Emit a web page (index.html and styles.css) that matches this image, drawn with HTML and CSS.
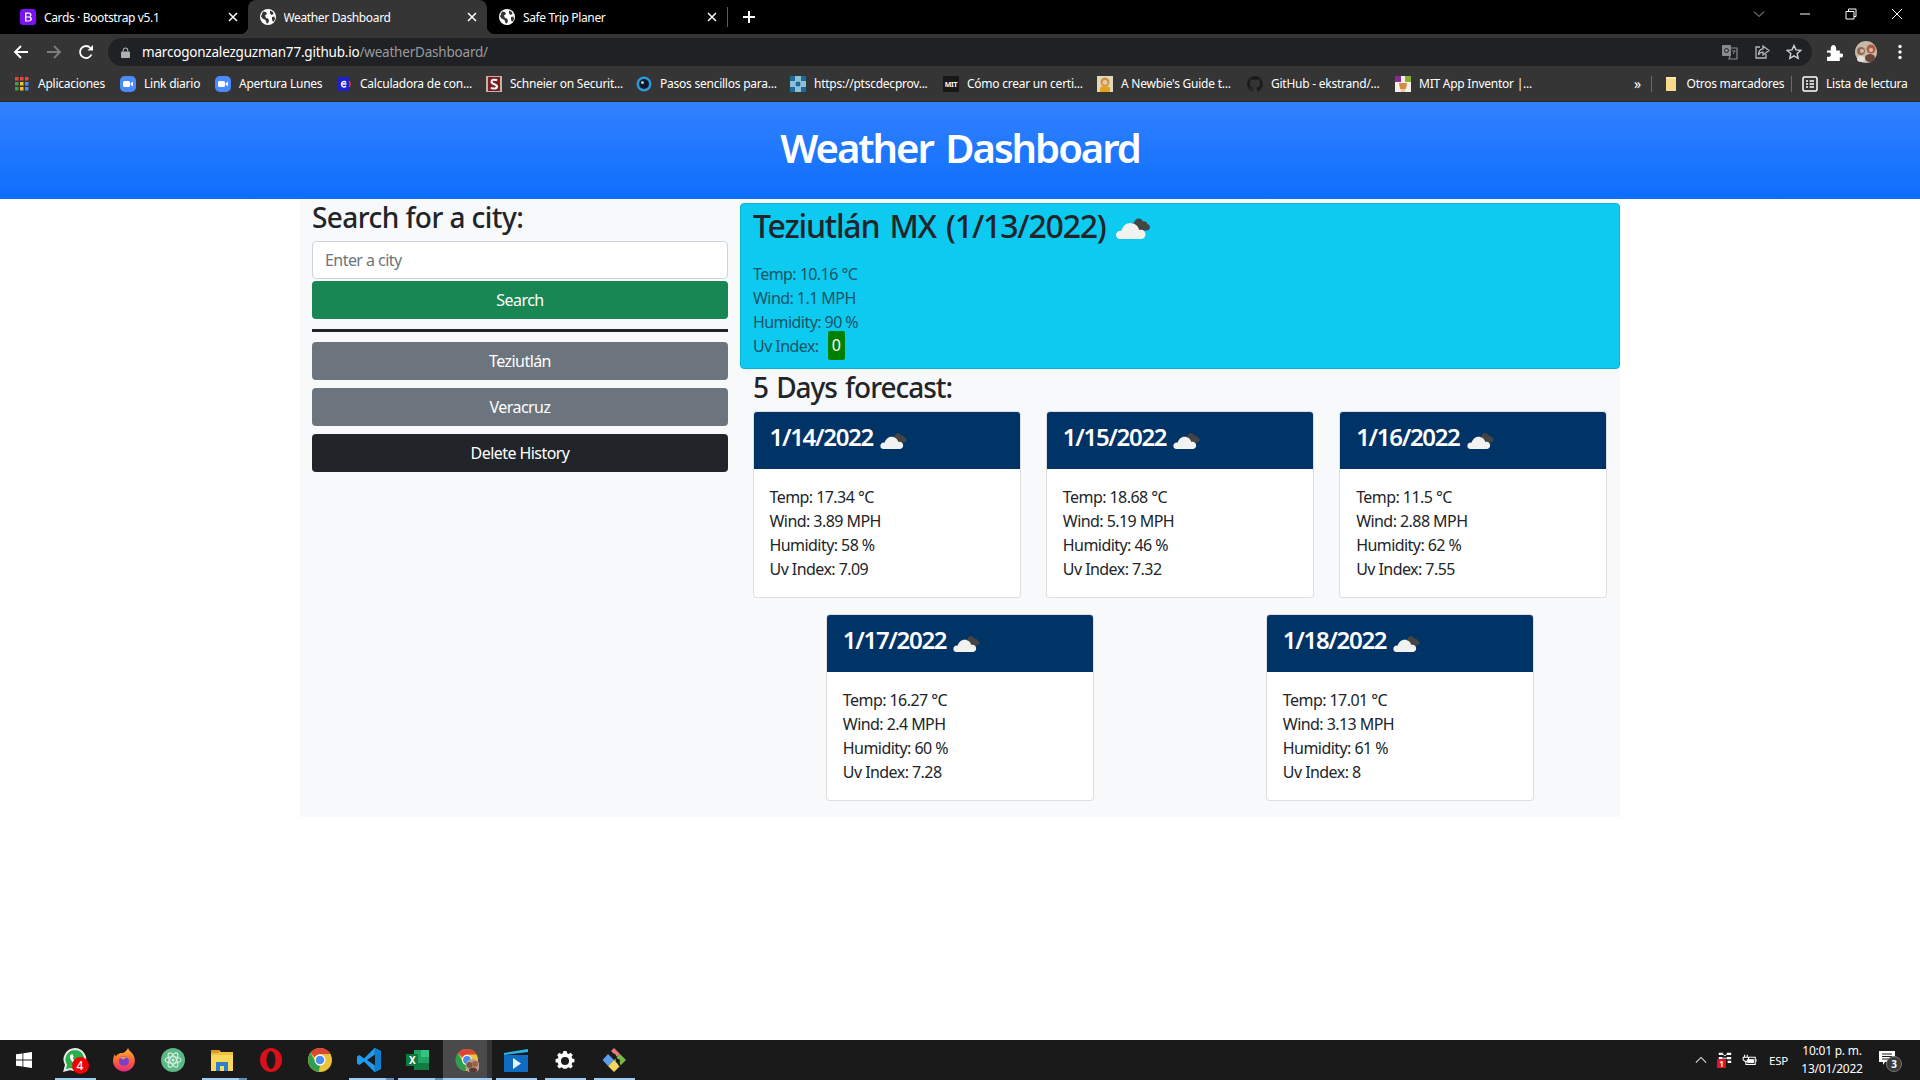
FILE: index.html
```html
<!DOCTYPE html>
<html lang="es">
<head>
<meta charset="utf-8">
<title>Weather Dashboard</title>
<link rel="stylesheet" href="styles.css">
</head>
<body>
<svg class="defs" width="0" height="0" aria-hidden="true">
  <symbol id="globe" viewBox="0 0 16 16">
    <circle cx="8" cy="8" r="8" fill="#fff"/>
    <path d="M3 2.500l3 .5 1 2-2 1.500L6 9l2 .5 1 2-1 3-1.500-.5-1-3-3-1.500L1 7.500zM10 1.500l3 1.500.5 2-2 1-1.500-1.500zM12 8l2.500-.5.5 3-2 2.500-1-2.500z" fill="#353535"/>
  </symbol>
  <symbol id="cloud" viewBox="0 0 34 22">
    <path d="M14 7c1-1 3-1.500 4-1 .5-3 3-5 5.500-4.500 1.800.3 3 1.500 3.500 3 2-.5 4 .5 4.300 2.500 1.700.3 2.700 1.700 2.700 3 0 2-1.500 3.500-3.500 3.500H20z" fill="#444"/>
    <path d="M4 22C1.700 22 0 20.300 0 18c0-2.500 2-4.300 4.300-4.300.4 0 .8 0 1.200.1C6.500 9.500 10 6 14.500 6c4.300 0 7.800 3 8.700 7 .5-.2 1-.3 1.600-.3 2.700 0 4.700 2 4.700 4.700S27.500 22 25 22z" fill="#f2f2f0"/>
  </symbol>
  <symbol id="zoomcam" viewBox="0 0 16 16">
    <rect width="16" height="16" rx="5" fill="#4a8cff"/>
    <rect x="3" y="5" width="7" height="6" rx="1.500" fill="#fff"/>
    <path d="M10.500 7.500l2.500-2v5l-2.500-2z" fill="#fff"/>
  </symbol>
</svg>

<div class="browser">
  <div class="tabstrip">
    <div class="tab">
      <svg class="favicon" viewBox="0 0 16 16"><rect width="16" height="16" rx="3" fill="#7b12f5"/><path d="M5 3.500h3.500c2 0 3 1 3 2.300 0 1-.6 1.800-1.500 2 1.200.2 2 1.100 2 2.300 0 1.600-1.200 2.400-3.200 2.400H5zM6.400 4.700v2.800h1.800c1.200 0 1.900-.5 1.900-1.500 0-.9-.6-1.300-1.800-1.300zM6.400 8.600v3h2c1.300 0 2-.5 2-1.500s-.8-1.500-2.200-1.500z" fill="#fff"/></svg>
      <span class="tab-title">Cards · Bootstrap v5.1</span>
      <svg class="tab-close" viewBox="0 0 12 12"><path d="M2 2l8 8M10 2l-8 8" stroke="#fff" stroke-width="1.500"/></svg>
    </div>
    <div class="tab tab-active">
      <svg class="favicon"><use href="#globe"/></svg>
      <span class="tab-title">Weather Dashboard</span>
      <svg class="tab-close" viewBox="0 0 12 12"><path d="M2 2l8 8M10 2l-8 8" stroke="#fff" stroke-width="1.500"/></svg>
    </div>
    <div class="tab">
      <svg class="favicon"><use href="#globe"/></svg>
      <span class="tab-title">Safe Trip Planer</span>
      <svg class="tab-close" viewBox="0 0 12 12"><path d="M2 2l8 8M10 2l-8 8" stroke="#fff" stroke-width="1.500"/></svg>
    </div>
    <span class="tab-sep"></span>
    <svg class="tab-new" viewBox="0 0 14 14"><path d="M7 1v12M1 7h12" stroke="#fff" stroke-width="2"/></svg>
    <div class="window-controls">
      <span class="win-btn"><svg viewBox="0 0 12 12"><path d="M1 3.500l5 5 5-5" fill="none" stroke="#b0b0b0"/></svg></span>
      <span class="win-btn"><svg viewBox="0 0 12 12"><path d="M1 6h10" stroke="#fff"/></svg></span>
      <span class="win-btn"><svg viewBox="0 0 12 12"><path d="M3.500 3V1h7.500v7.500H9M1 3.500h8V11H1z" fill="none" stroke="#fff"/></svg></span>
      <span class="win-btn"><svg viewBox="0 0 12 12"><path d="M1 1l10 10M11 1L1 11" stroke="#fff"/></svg></span>
    </div>
  </div>

  <div class="toolbar">
    <span class="nav-btn"><svg viewBox="0 0 16 16"><path d="M15 8H2M8 2L2 8l6 6" fill="none" stroke="#fff" stroke-width="1.800"/></svg></span>
    <span class="nav-btn"><svg viewBox="0 0 16 16"><path d="M1 8h13M8 2l6 6-6 6" fill="none" stroke="#7d7d7d" stroke-width="1.800"/></svg></span>
    <span class="nav-btn"><svg viewBox="0 0 16 16"><path d="M13.500 10.500A6 6 0 1 1 12.500 4" fill="none" stroke="#fff" stroke-width="1.800"/><path d="M9.500 6.500h5.500V1z" fill="#fff"/></svg></span>
    <div class="omnibox">
      <svg class="lock" viewBox="0 0 10 12"><path d="M2.500 5V3.500a2.500 2.500 0 0 1 5 0V5" fill="none" stroke="#b0b1b3" stroke-width="1.200"/><rect y="5" width="10" height="7" rx="1" fill="#b0b1b3"/></svg>
      <span class="url">marcogonzalezguzman77.github.io<span class="url-path">/weatherDashboard/</span></span>
      <svg class="omni-icon" viewBox="0 0 16 16"><rect x="0" y="1" width="9" height="11" rx="1" fill="#8a8b8d"/><path d="M8 4h7v11H7l1-3z" fill="none" stroke="#8a8b8d" stroke-width="1.200"/><circle cx="4.500" cy="6.500" r="2" fill="none" stroke="#202124"/><path d="M10 7h3.500M11 10l2-3" stroke="#8a8b8d"/></svg>
      <svg class="omni-icon" viewBox="0 0 16 16"><path d="M6 3H2v11h10v-4" fill="none" stroke="#b5b6b8" stroke-width="1.300"/><path d="M9 2l6 4.500L9 11V8.200C7 8.200 5.500 9 4.500 11c0-3.500 1.500-6 4.500-6.200z" fill="none" stroke="#b5b6b8" stroke-width="1.300"/></svg>
      <svg class="omni-icon" viewBox="0 0 16 16"><path d="M8 1.500l2 4.400 4.800.5-3.600 3.200 1 4.700L8 11.900l-4.200 2.400 1-4.700L1.200 6.400 6 5.900z" fill="none" stroke="#d0d1d3" stroke-width="1.400"/></svg>
    </div>
    <svg class="tool-icon" viewBox="0 0 16 16"><path d="M1 6h3.500C4 2.500 5.500 1 7 1s3 1.500 2.500 5H13v3c3-.5 3.500 1 3 2.500-.5 1-1.500 1.500-3 1V16H1v-4c2.500.5 3.500-.5 3.500-2S3.500 7.500 1 8.500z" fill="#fff"/></svg>
    <svg class="avatar" viewBox="0 0 22 22"><circle cx="11" cy="11" r="11" fill="#c8b8a8"/><circle cx="6" cy="10" r="4" fill="#8a6a58"/><circle cx="16" cy="8" r="4.500" fill="#a85f48"/><ellipse cx="15" cy="17" rx="5" ry="4" fill="#6a4438"/><ellipse cx="6" cy="18" rx="4" ry="3" fill="#e8e0d8"/><circle cx="7" cy="10" r="2" fill="#e0b8a0"/><circle cx="16" cy="9" r="2" fill="#e8b8a0"/></svg>
    <svg class="tool-dots" viewBox="0 0 4 16"><circle cx="2" cy="2.500" r="1.700" fill="#fff"/><circle cx="2" cy="8" r="1.700" fill="#fff"/><circle cx="2" cy="13.500" r="1.700" fill="#fff"/></svg>
  </div>

  <div class="bookmarks">
    <span class="bm">
      <svg class="bm-icon" viewBox="-1 -1 16 16"><g><rect x="0" y="0" width="3.500" height="3.500" fill="#e8453c"/><rect x="5" y="0" width="3.500" height="3.500" fill="#e8453c"/><rect x="10" y="0" width="3.500" height="3.500" fill="#e8453c"/><rect x="0" y="5" width="3.500" height="3.500" fill="#4a9a55"/><rect x="5" y="5" width="3.500" height="3.500" fill="#f9bb2d"/><rect x="10" y="5" width="3.500" height="3.500" fill="#4a8cf0"/><rect x="0" y="10" width="3.500" height="3.500" fill="#4a9a55"/><rect x="5" y="10" width="3.500" height="3.500" fill="#f9bb2d"/><rect x="10" y="10" width="3.500" height="3.500" fill="#4a8cf0"/></g></svg>
      <span class="bm-label w66">Aplicaciones</span>
    </span>
    <span class="bm"><svg class="bm-icon"><use href="#zoomcam"/></svg><span class="bm-label w55">Link diario</span></span>
    <span class="bm"><svg class="bm-icon"><use href="#zoomcam"/></svg><span class="bm-label w81">Apertura Lunes</span></span>
    <span class="bm">
      <svg class="bm-icon" viewBox="0 0 16 16"><rect x="2" y="1" width="11" height="14" rx="1" fill="#1d1fd0"/><path d="M10.500 8H5.500a2.500 2.500 0 0 1 4.500-1.500M5.500 8.500a2.500 2.500 0 0 0 4.500 1.500" fill="none" stroke="#fff" stroke-width="1.300"/><path d="M13 5c1.500 2 1.500 4 0 6" fill="none" stroke="#e8352c" stroke-width="1.500"/></svg>
      <span class="bm-label w110">Calculadora de con...</span>
    </span>
    <span class="bm">
      <svg class="bm-icon" viewBox="0 0 16 16"><rect width="16" height="16" fill="#c8b0a8"/><rect x="2" y="1" width="12" height="14" fill="#7c1f22"/><path d="M11 4.500C10 3.500 5.500 3 5.500 5.800S11 7.800 11 10.500 6 13 5 11.500" fill="none" stroke="#fff" stroke-width="2"/></svg>
      <span class="bm-label w110">Schneier on Securit...</span>
    </span>
    <span class="bm">
      <svg class="bm-icon" viewBox="0 0 16 16"><circle cx="8" cy="8" r="7.500" fill="#2a9ad8"/><circle cx="8" cy="8" r="5" fill="#10182a"/><circle cx="6.500" cy="6.500" r="1.500" fill="#9ad8f0"/></svg>
      <span class="bm-label w114">Pasos sencillos para...</span>
    </span>
    <span class="bm">
      <svg class="bm-icon" viewBox="0 0 16 16"><rect width="16" height="16" fill="#dfe8f0"/><path d="M0 0h5v5H0zM11 0h5v5h-5zM5.500 5.500h5v5h-5zM0 11h5v5H0zM11 11h5v5h-5z" fill="#1f6a9a"/><path d="M5 0h6v5H5zM0 5h5v6H0zM11 5h5v6h-5zM5 11h6v5H5z" fill="#8ac0d8"/></svg>
      <span class="bm-label w113">https://ptscdecprov...</span>
    </span>
    <span class="bm">
      <svg class="bm-icon" viewBox="0 0 16 16"><rect width="16" height="16" fill="#181818"/><text x="8" y="11" text-anchor="middle" class="nt">MIT</text></svg>
      <span class="bm-label w114">Cómo crear un certi...</span>
    </span>
    <span class="bm">
      <svg class="bm-icon" viewBox="0 0 16 16"><rect width="16" height="16" fill="#e0d8b8"/><circle cx="8" cy="6" r="4.500" fill="#c89048"/><circle cx="8" cy="6.500" r="2.500" fill="#e8c898"/><path d="M3 16v-4c0-1 2-2 5-2s5 1 5 2v4z" fill="#e8a020"/></svg>
      <span class="bm-label w110">A Newbie's Guide t...</span>
    </span>
    <span class="bm">
      <svg class="bm-icon" viewBox="0 0 16 16"><path d="M8 0a8 8 0 0 0-2.500 15.600c.4.100.5-.2.500-.4v-1.400c-2.200.5-2.700-1-2.700-1-.4-.9-.9-1.200-.9-1.200-.7-.5.100-.5.100-.5.800.1 1.200.8 1.200.8.700 1.200 1.900.9 2.300.7.100-.5.300-.9.500-1.100-1.800-.2-3.600-.9-3.600-4 0-.9.300-1.600.8-2.100-.1-.2-.4-1 .1-2.100 0 0 .7-.2 2.200.8a7.600 7.600 0 0 1 4 0c1.500-1 2.200-.8 2.200-.8.400 1.100.2 1.900.1 2.100.5.600.8 1.300.8 2.100 0 3.100-1.900 3.700-3.700 3.900.3.300.6.700.6 1.500v2.200c0 .2.100.5.600.4A8 8 0 0 0 8 0z" fill="#1b1b1b"/></svg>
      <span class="bm-label w108">GitHub - ekstrand/...</span>
    </span>
    <span class="bm">
      <svg class="bm-icon" viewBox="0 0 16 16"><rect width="16" height="16" fill="#f4f0e8"/><path d="M0 0h6v6H0z" fill="#8a2a90"/><path d="M10 0h6v6h-6z" fill="#8ab030"/><path d="M4 7h8l-1 6H5z" fill="#d88a40"/><path d="M6 13h4v3H6z" fill="#e8c8a0"/></svg>
      <span class="bm-label w108">MIT App Inventor |...</span>
    </span>
    <div class="bm-right">
      <span class="bm-more">»</span>
      <span class="bm-sep"></span>
      <span class="bm">
        <svg class="bm-icon" viewBox="0 0 16 16"><path d="M3 1h10v14H3z" fill="#f6d98a"/><path d="M3 1h10v2H3z" fill="#fbe9b0"/></svg>
        <span class="bm-label w94">Otros marcadores</span>
      </span>
      <span class="bm-sep"></span>
      <span class="bm">
        <svg class="bm-icon" viewBox="0 0 16 16"><rect x="1" y="1" width="14" height="14" rx="1.500" fill="none" stroke="#fff" stroke-width="1.500"/><path d="M4 5h2M7.500 5H12M4 8h2M7.500 8H12M4 11h2M7.500 11H12" stroke="#fff" stroke-width="1.500"/></svg>
        <span class="bm-label w80">Lista de lectura</span>
      </span>
    </div>
  </div>
</div>

<main class="page">
  <header class="hero"><h1>Weather Dashboard</h1></header>
  <div class="container">
    <aside class="side">
      <h3 class="side-title">Search for a city:</h3>
      <input class="city-input" type="text" placeholder="Enter a city">
      <button class="btn btn-search">Search</button>
      <hr class="rule">
      <div class="history">
        <button class="btn btn-city">Teziutlán</button>
        <button class="btn btn-city">Veracruz</button>
        <button class="btn btn-dark">Delete History</button>
      </div>
    </aside>
    <section class="content">
      <div class="current">
        <h2 class="current-title"><span>Teziutlán MX (1/13/2022)</span><svg class="cloud-lg"><use href="#cloud"/></svg></h2>
        <p class="stat">Temp: 10.16 °C</p>
        <p class="stat">Wind: 1.1 MPH</p>
        <p class="stat">Humidity: 90 %</p>
        <p class="stat stat-uv">Uv Index: <span class="uv-badge">0</span></p>
      </div>
      <h3 class="forecast-title">5 Days forecast:</h3>
      <div class="forecast">
        <div class="fc-col"><article class="fc-card">
          <div class="fc-head"><h4>1/14/2022</h4><svg class="cloud-sm"><use href="#cloud"/></svg></div>
          <div class="fc-body"><p>Temp: 17.34 °C</p><p>Wind: 3.89 MPH</p><p>Humidity: 58 %</p><p>Uv Index: 7.09</p></div>
        </article></div>
        <div class="fc-col"><article class="fc-card">
          <div class="fc-head"><h4>1/15/2022</h4><svg class="cloud-sm"><use href="#cloud"/></svg></div>
          <div class="fc-body"><p>Temp: 18.68 °C</p><p>Wind: 5.19 MPH</p><p>Humidity: 46 %</p><p>Uv Index: 7.32</p></div>
        </article></div>
        <div class="fc-col"><article class="fc-card">
          <div class="fc-head"><h4>1/16/2022</h4><svg class="cloud-sm"><use href="#cloud"/></svg></div>
          <div class="fc-body"><p>Temp: 11.5 °C</p><p>Wind: 2.88 MPH</p><p>Humidity: 62 %</p><p>Uv Index: 7.55</p></div>
        </article></div>
        <div class="fc-col"><article class="fc-card">
          <div class="fc-head"><h4>1/17/2022</h4><svg class="cloud-sm"><use href="#cloud"/></svg></div>
          <div class="fc-body"><p>Temp: 16.27 °C</p><p>Wind: 2.4 MPH</p><p>Humidity: 60 %</p><p>Uv Index: 7.28</p></div>
        </article></div>
        <div class="fc-col"><article class="fc-card">
          <div class="fc-head"><h4>1/18/2022</h4><svg class="cloud-sm"><use href="#cloud"/></svg></div>
          <div class="fc-body"><p>Temp: 17.01 °C</p><p>Wind: 3.13 MPH</p><p>Humidity: 61 %</p><p>Uv Index: 8</p></div>
        </article></div>
      </div>
    </section>
  </div>
</main>

<footer class="taskbar">
  <span class="start"><svg viewBox="0 0 16 16"><path d="M0 2.300l6.500-.9v6.200H0zM7.300 1.300L16 0v7.600H7.300zM0 8.400h6.500v6.200L0 13.700zM7.300 8.400H16V16l-8.700-1.200z" fill="#fff"/></svg></span>
  <span class="tb-item tb-open">
    <svg viewBox="0 0 24 24"><path d="M12 1a10.500 10.500 0 0 0-9 15.800L1.500 22.500l5.800-1.500A10.500 10.500 0 1 0 12 1z" fill="#25b04a" stroke="#e8e8e8" stroke-width="2"/><path d="M8 6.500c-1 .5-1.500 2-1 3.500 1 3 3.500 5.500 6.500 6.500 1.500.4 3 0 3.500-1l.3-1.500-2.800-1.400-1 1.200c-1.500-.5-3-2-3.800-3.800l1-1.200L9.500 6z" fill="#fff"/></svg>
    <span class="tb-badge">4</span>
  </span>
  <span class="tb-item">
    <svg viewBox="0 0 24 24"><defs><linearGradient id="ff" x1="0" y1="0" x2="0" y2="1"><stop offset="0" stop-color="#ffb52e"/><stop offset=".6" stop-color="#ff5a3a"/><stop offset="1" stop-color="#e0298a"/></linearGradient></defs><path d="M16 0c1 3 3.500 4 5 6.500 2 3 2.500 7 1 10.500a11 11 0 0 1-21-3C1 11 1.500 8 3 6c0 1 .5 2 1 2.500C5 6 8 4.500 11 5c2-1 4-2.500 5-5z" fill="url(#ff)"/><circle cx="12" cy="13" r="5" fill="#7a3fc8"/><path d="M8 10c2-2 6-2 8 0-2-.5-3.500 0-4 1.500z" fill="#ff9a30"/></svg>
  </span>
  <span class="tb-item">
    <svg viewBox="0 0 24 24"><circle cx="12" cy="12" r="12" fill="#5cb885"/><g fill="none" stroke="#d8f4e4" stroke-width="1.100"><ellipse cx="12" cy="12" rx="8" ry="3.300" transform="rotate(60 12 12)"/><ellipse cx="12" cy="12" rx="8" ry="3.300" transform="rotate(-60 12 12)"/><ellipse cx="12" cy="12" rx="8" ry="3.300"/></g><circle cx="12" cy="12" r="1.500" fill="#d8f4e4"/></svg>
  </span>
  <span class="tb-item tb-open tb-stack">
    <svg viewBox="0 0 24 24"><path d="M1 2h8l2 2h12v19H1z" fill="#f0c040"/><path d="M1 2h8v3H1z" fill="#d89a20"/><path d="M1 7h22v16H1z" fill="#fbd75a"/><path d="M6 23v-9h12v9h-4v-5h-4v5z" fill="#2a7fd0"/></svg>
  </span>
  <span class="tb-item">
    <svg viewBox="0 0 24 24"><ellipse cx="12" cy="12" rx="11" ry="12" fill="#d9101c"/><ellipse cx="12" cy="12" rx="4.500" ry="9" fill="#1a1a1a"/></svg>
  </span>
  <span class="tb-item">
    <svg viewBox="0 0 24 24"><circle cx="12" cy="12" r="12" fill="#e9c43a"/><path d="M12 0a12 12 0 0 1 10.400 6H12a6 6 0 0 0-5.200 3L2.500 5A12 12 0 0 1 12 0z" fill="#db4437"/><path d="M2.500 5l5.200 9a6 6 0 0 0 4.300 4l-1.500 5.900A12 12 0 0 1 2.500 5z" fill="#2f9e50"/><circle cx="12" cy="12" r="5.500" fill="#fff"/><circle cx="12" cy="12" r="4.300" fill="#4a8cf0"/></svg>
  </span>
  <span class="tb-item tb-open tb-stack">
    <svg viewBox="0 0 24 24"><path d="M17.500 0L24 3v18l-6.500 3L7 13.500 2.500 17 0 15.500V8.500L2.500 7 7 10.500z" fill="#1f9cf0"/><path d="M17.500 0L24 3v18l-6.500 3z" fill="#0e7fd0"/><path d="M18 6.500L10 12l8 5.500z" fill="#1a1a1a"/></svg>
  </span>
  <span class="tb-item tb-open tb-stack">
    <svg viewBox="0 0 24 24"><path d="M8 2h15v20H8z" fill="#21a366"/><path d="M15 2h8v7h-8zM15 15.500h8V22h-8z" fill="#33c481"/><path d="M8 15h15v7H8z" fill="#107c41"/><path d="M0 6h12v12H0z" fill="#0f7a3e"/><text x="6" y="16" text-anchor="middle" class="xl">X</text></svg>
  </span>
  <span class="tb-item tb-open tb-active">
    <svg viewBox="0 0 24 24"><circle cx="12" cy="12" r="11" fill="#e9c43a"/><path d="M12 1a11 11 0 0 1 9.500 5.500H12a5.500 5.500 0 0 0-4.800 2.800L3 5a11 11 0 0 1 9-4z" fill="#db4437"/><path d="M3 5l4.500 8.500a5.500 5.500 0 0 0 4.500 4L10.500 23A11 11 0 0 1 3 5z" fill="#2f9e50"/><circle cx="12" cy="12" r="5" fill="#fff"/><circle cx="12" cy="12" r="3.900" fill="#4a8cf0"/><circle cx="17.500" cy="18" r="7" fill="#b8a090"/><circle cx="14.500" cy="17" r="3" fill="#7a5848"/><circle cx="20" cy="16" r="3" fill="#a85f48"/><ellipse cx="18" cy="22" rx="4" ry="2.500" fill="#5a3a30"/></svg>
  </span>
  <span class="tb-item tb-open">
    <svg viewBox="0 0 24 24"><path d="M0 5l24-4v3L0 7z" fill="#28b8e8"/><path d="M0 7h24v17H0z" fill="#0f6cc0"/><path d="M9 10l8 5.500L9 21z" fill="#e8f4ff"/></svg>
  </span>
  <span class="tb-item tb-open">
    <svg viewBox="0 0 24 24"><path d="M10 2h4l.6 2.800 2 .8L19 4l2.800 2.800-1.600 2.400.8 2 2.800.6v4l-2.800.6-.8 2L21.800 21 19 23.800l-2.400-1.600-2 .8-.6 1h-4l-.6-1-2-.8L5 23.800 2.200 21l1.600-2.400-.8-2L.200 16v-4l2.800-.6.8-2L2.200 6.800 5 4l2.400 1.600 2-.8z" transform="translate(2.400 1.500) scale(.8)" fill="#fff"/><circle cx="12" cy="13" r="4" fill="#1a1a1a"/></svg>
  </span>
  <span class="tb-item tb-open">
    <svg viewBox="0 0 24 24"><path d="M12 12L6 6 .5 12 6 18z" fill="#5c9cf0"/><path d="M9 3l3-3 6 6-3 3z" fill="#e87a7a"/><path d="M6 18l6 6 6-6-6-6z" fill="#f0d860"/><path d="M12 12l6-6 6 6-6 6z" fill="#7ab648"/><path d="M12 6l6 12" stroke="#1a1a1a" stroke-width="2"/><circle cx="16" cy="13" r="2" fill="#1a1a1a"/></svg>
  </span>

  <div class="tray">
    <svg class="tray-caret" viewBox="0 0 14 8"><path d="M1 7l6-6 6 6" fill="none" stroke="#ddd" stroke-width="1.300"/></svg>
    <svg class="tray-net" viewBox="0 0 18 18"><path d="M2 2h5M11 2h5M2 7h4M11 7h5M12 11h4" stroke="#fff" stroke-width="2.500"/><path d="M6 2l3 2.500L11 2M6 7h5" stroke="#fff"/><rect x="0" y="8" width="10" height="10" fill="#e81123"/><text x="5" y="16.500" text-anchor="middle" class="net-num">1</text></svg>
    <svg class="tray-batt" viewBox="0 0 18 14"><path d="M4 1v3M7 1v3M2.500 4h6v3L5.500 9 2.500 7z" fill="none" stroke="#fff" stroke-width="1.200"/><path d="M5.500 9v3H16V4H9" fill="none" stroke="#fff" stroke-width="1.200"/><path d="M7 6h7.500v4.500H7z" fill="#fff"/><path d="M17 6v3" stroke="#fff"/></svg>
    <span class="tray-lang">ESP</span>
    <span class="tray-clock"><span>10:01 p. m.</span><span>13/01/2022</span></span>
    <span class="tray-notify">
      <svg viewBox="0 0 16 15"><path d="M0 0h16v11H6l-2 3v-3H0z" fill="#fff"/><path d="M3 3h10M3 5.500h10M3 8h7" stroke="#1a1a1a"/></svg>
      <span class="notify-badge">3</span>
    </span>
  </div>
</footer>
</body>
</html>
```

FILE: styles.css
```css
* { box-sizing: border-box; }
html, body { margin: 0; height: 100%; }
body {
  display: flex;
  flex-direction: column;
  height: 1080px;
  overflow: hidden;
  background: #fff;
  color: #212529;
  font-family: "Noto Sans", "Open Sans", sans-serif;
  font-size: 16px;
  letter-spacing: -0.035em;
}
.defs { position: absolute; }

/* Browser chrome */
.browser { flex: none; height: 102px; background: #353535; color: #fff; font-size: 12px; letter-spacing: -0.02em; }
.tabstrip { display: flex; align-items: center; height: 34px; padding-left: 8px; background: #000; }
.tab { display: flex; align-items: center; flex: none; width: 239.500px; height: 34px; padding: 0 9px 0 12px; }
.tab-active { position: relative; background: #353535; border-radius: 8px 8px 0 0; }
.tab-active::before, .tab-active::after { content: ""; position: absolute; bottom: 0; width: 8px; height: 8px; }
.tab-active::before { left: -8px; background: radial-gradient(circle at 0 0, #000 8px, #353535 8.500px); }
.tab-active::after { right: -8px; background: radial-gradient(circle at 100% 0, #000 8px, #353535 8.500px); }
.favicon { flex: none; width: 16px; height: 16px; margin-right: 8px; }
.tab-title { flex: 1; white-space: nowrap; overflow: hidden; letter-spacing: -0.03em; }
.tab-close { flex: none; width: 12px; height: 12px; }
.tab-sep { flex: none; width: 1px; height: 20px; background: #5a5a5a; }
.tab-new { flex: none; width: 14px; height: 14px; margin-left: 14px; }
.window-controls { display: flex; margin-left: auto; align-self: stretch; }
.win-btn { display: flex; align-items: center; justify-content: center; width: 46px; height: 28px; }
.win-btn svg { width: 12px; height: 12px; }

.toolbar { display: flex; align-items: center; height: 32px; padding-left: 5px; padding-top: 4px; }
.nav-btn { display: flex; align-items: center; justify-content: center; flex: none; width: 32.500px; height: 28px; }
.nav-btn svg { width: 16px; height: 16px; }
.omnibox { display: flex; align-items: center; flex: none; width: 1704px; height: 28px; margin-left: 5.500px; padding: 0 10px 0 13px; background: #202124; border-radius: 14px; }
.lock { flex: none; width: 9px; height: 11px; margin-right: 12px; }
.url { flex: 1; font-size: 13.500px; letter-spacing: -0.015em; color: #fff; white-space: nowrap; }
.url-path { color: #9a9b9d; }
.omni-icon { flex: none; width: 16px; height: 16px; margin-left: 16px; }
.tool-icon { flex: none; width: 17px; height: 17px; margin-left: 14px; }
.avatar { flex: none; width: 22px; height: 22px; margin-left: 12px; }
.tool-dots { flex: none; width: 4px; height: 16px; margin-left: 21px; }

.bookmarks { display: flex; align-items: center; height: 36px; padding: 0 14px; border-bottom: 1px solid #2a2a2a; }
.bm { display: flex; align-items: center; flex: none; margin-right: 16px; }
.bm-icon { flex: none; width: 16px; height: 16px; margin-right: 8px; }
.bm-label { white-space: nowrap; }
.w55 { width: 55px; } .w66 { width: 66px; } .w80 { width: 80px; } .w81 { width: 81px; } .w94 { width: 94px; }
.w108 { width: 108px; } .w110 { width: 110px; } .w113 { width: 113px; } .w114 { width: 114px; }
.nt { font-size: 7px; font-weight: 700; fill: #fff; }
.bm-right { display: flex; align-items: center; margin-left: auto; }
.bm-more { margin-right: 10px; font-size: 14px; }
.bm-sep { width: 1px; height: 16px; margin-right: 10.500px; background: #6a6a6a; }
.bm-right .bm { margin-right: 10px; }
.bm-right .bm:last-child { margin-right: 0; }

/* Page */
.page { flex: 1; min-height: 0; }
.hero { display: flex; align-items: center; justify-content: center; height: 97px; padding-bottom: 5px; background: linear-gradient(#3381ff, #0d6efd); }
.hero h1 { margin: 0; color: #fff; font-size: 40px; font-weight: 600; line-height: 1.2; letter-spacing: -0.05em; word-spacing: 0.1em; }
.container { display: flex; width: 1320px; margin: 0 auto; background: #f8f9fa; }
.side { flex: none; width: 440px; padding: 0 12px; }
.side-title { margin: 0 0 6px; padding-top: 2px; font-size: 28px; font-weight: 500; line-height: 1.2; }
.city-input { display: block; width: 100%; height: 38px; margin-bottom: 2.400px; padding: 0 12px; border: 1px solid #ced4da; border-radius: 4px; background: #fff; font: inherit; letter-spacing: inherit; color: #212529; }
.city-input::placeholder { color: #6c757d; opacity: 1; }
.btn { display: block; width: 100%; height: 38px; border: 0; border-radius: 4px; color: #fff; font: inherit; letter-spacing: inherit; }
.btn-search { background: #198754; }
.btn-city { background: #6c757d; }
.btn-dark { background: #212529; }
.rule { height: 3px; margin: 10px 0; border: 0; background: #212529; }
.history { display: flex; flex-direction: column; gap: 8px; }

.content { flex: none; width: 880px; padding-top: 4px; }
.current { height: 166px; padding: 3px 12px 0; border: 1px solid #0bb5d8; border-radius: 4px; background: #0dcaf0; }
.current-title { display: flex; align-items: center; gap: 10px; margin: 0 0 17px; font-size: 32px; font-weight: 500; line-height: 38.400px; letter-spacing: -0.037em; word-spacing: 0.09em; }
.cloud-lg { width: 34px; height: 22px; margin-top: 4px; }
.stat { margin: 0; line-height: 24px; color: #165566; }
.stat-uv { display: flex; align-items: center; }
.uv-badge { width: 17px; height: 29px; margin: -3px 0 -2px 9px; border-radius: 2px; background: #008000; color: #fff; line-height: 29px; text-align: center; }
.forecast-title { margin: 0.400px 0 6px; padding: 2px 0 0 13px; font-size: 28px; font-weight: 500; line-height: 1.2; letter-spacing: -0.037em; word-spacing: 0.07em; }
.forecast { display: flex; flex-wrap: wrap; justify-content: space-around; }
.fc-col { flex: none; width: 33.333%; padding: 0 12.500px 16px; }
.fc-card { border: 1px solid rgba(0, 0, 0, .125); border-radius: 4px; background: #fff; overflow: hidden; }
.fc-head { display: flex; align-items: center; gap: 7px; height: 57px; padding: 0 16px 6px; background: #003366; color: #fff; }
.fc-head h4 { margin: 0; font-size: 24px; font-weight: 600; line-height: 1.2; letter-spacing: -0.055em; }
.cloud-sm { width: 27px; height: 17px; margin-top: 6px; }
.fc-body { padding: 16px; }
.fc-body p { margin: 0; line-height: 24px; }

/* Taskbar */
.taskbar { display: flex; align-items: center; flex: none; height: 40px; background: #1a1a1a; }
.start { display: flex; align-items: center; justify-content: center; flex: none; width: 48px; margin-right: 2.500px; }
.start svg { width: 16px; height: 16px; }
.tb-item { position: relative; display: flex; align-items: center; justify-content: center; flex: none; width: 49px; height: 40px; }
.tb-item svg { width: 24px; height: 24px; }
.tb-open::after { content: ""; position: absolute; left: 4px; right: 4px; bottom: 0; height: 2px; background: #9fcdf5; }
.tb-stack::after { right: 0; background: linear-gradient(90deg, #9fcdf5 82%, #5d8fb8 82%); }
.tb-active { background: linear-gradient(90deg, #4a4a4a 90%, #333 90%); }
.tb-active::after { left: 0; right: 0; }
.tb-badge { position: absolute; left: 21px; top: 17px; width: 17px; height: 17px; border-radius: 50%; background: #f40000; color: #fff; font-size: 12px; font-weight: 500; line-height: 17px; text-align: center; letter-spacing: 0; }
.xl { font-size: 10px; font-weight: 700; fill: #fff; }
.net-num { font-size: 9px; font-weight: 700; fill: #fff; }
.tray { display: flex; align-items: center; margin-left: auto; padding-right: 17px; color: #fff; font-size: 12px; letter-spacing: -0.02em; }
.tray-caret { width: 12px; height: 8px; margin-right: 10px; }
.tray-net { width: 16px; height: 16px; margin-right: 8px; }
.tray-batt { width: 16px; height: 14px; margin-right: 12px; }
.tray-lang { width: 18px; margin-right: 15px; font-size: 11.500px; white-space: nowrap; }
.tray-clock { display: flex; flex-direction: column; align-items: center; width: 60px; margin-right: 17px; line-height: 18px; white-space: nowrap; }
.tray-notify { position: relative; display: flex; width: 24px; height: 24px; }
.tray-notify svg { width: 16px; height: 15px; margin-top: 3px; }
.notify-badge { position: absolute; left: 7px; top: 8px; width: 16px; height: 16px; border: 1px solid #777; border-radius: 50%; background: #3a3a3a; font-size: 10px; font-weight: 700; line-height: 14px; text-align: center; }
```
